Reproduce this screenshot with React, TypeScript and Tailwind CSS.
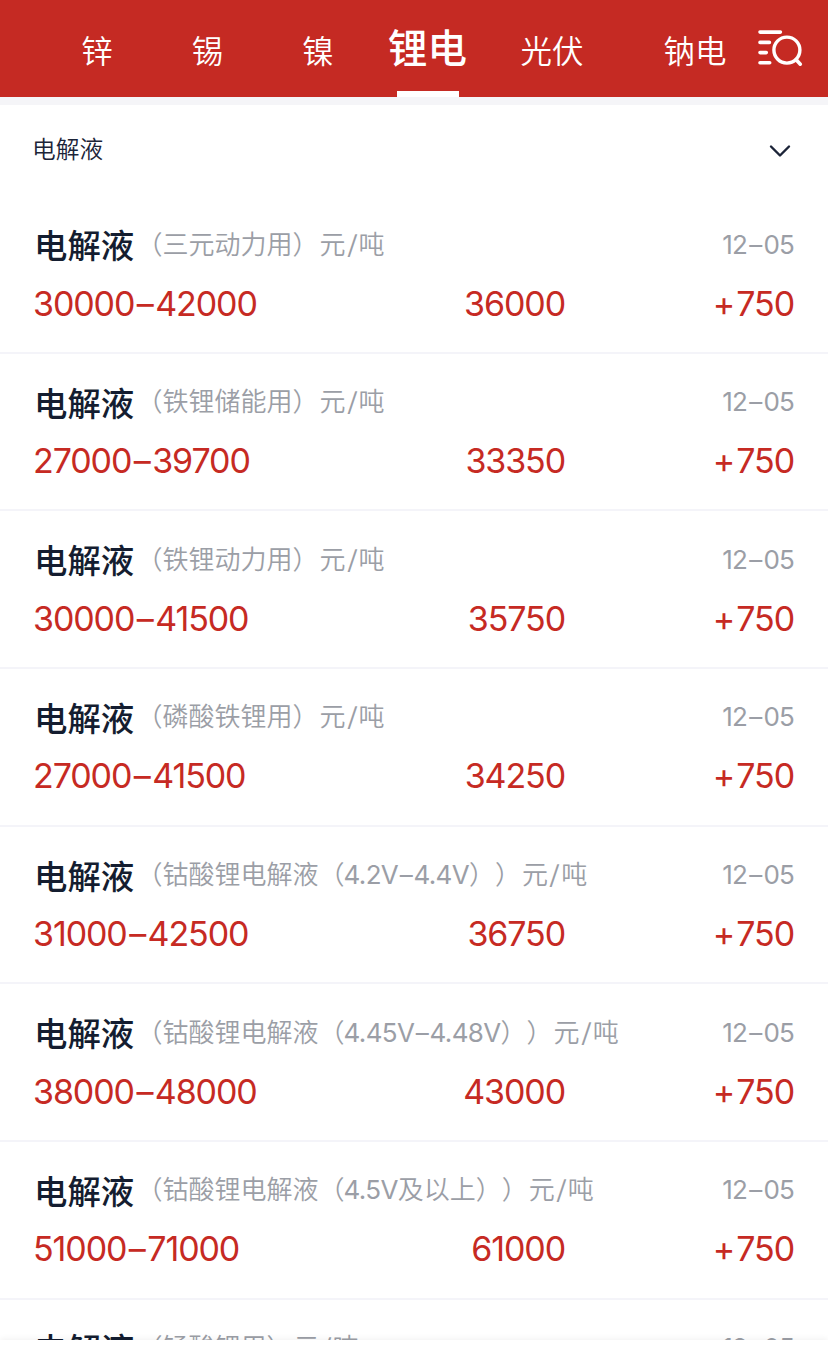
import { Fragment } from 'react';
import { ChevronDown } from 'lucide-react';
import clsx from 'clsx';

interface Quote {
  spec: string;
  range: string;
  average: string;
  change: string;
  date: string;
}

const TABS = [
  { label: '锌', className: 'w-[110px]' },
  { label: '锡', className: 'w-[111px]' },
  { label: '镍', className: 'w-[110px]' },
  { label: '锂电', className: 'w-[109px]' },
  { label: '光伏', className: 'w-[140px]' },
  { label: '钠电', className: 'ml-[33px] w-[80px]' },
];

const QUOTES: Quote[] = [
  { spec: '（三元动力用）', range: '30000–42000', average: '36000', change: '750', date: '12–05' },
  { spec: '（铁锂储能用）', range: '27000–39700', average: '33350', change: '750', date: '12–05' },
  { spec: '（铁锂动力用）', range: '30000–41500', average: '35750', change: '750', date: '12–05' },
  { spec: '（磷酸铁锂用）', range: '27000–41500', average: '34250', change: '750', date: '12–05' },
  { spec: '（钴酸锂电解液（4.2V–4.4V））', range: '31000–42500', average: '36750', change: '750', date: '12–05' },
  { spec: '（钴酸锂电解液（4.45V–4.48V））', range: '38000–48000', average: '43000', change: '750', date: '12–05' },
  { spec: '（钴酸锂电解液（4.5V及以上））', range: '51000–71000', average: '61000', change: '750', date: '12–05' },
  { spec: '（锰酸锂用）', range: '27000–39000', average: '33000', change: '750', date: '12–05' },
];

// Gives the dash between two numbers a bit of air
function Dashed({ text, gap }: { text: string; gap: string }) {
  return text.split('–').map((part, i) => (
    <Fragment key={i}>
      {i > 0 && <span className={gap}>–</span>}
      {part}
    </Fragment>
  ));
}

// Latin runs are set a step heavier than the Chinese around them
function Spec({ text }: { text: string }) {
  return text.split(/([\dV.–]+)/).map((run, i) =>
    i % 2 === 1 ? (
      <span key={i} className="-ml-px font-normal tracking-[-0.65px]">
        <Dashed text={run} gap="mx-[1.5px]" />
      </span>
    ) : (
      run
    )
  );
}

function ListSearchIcon() {
  return (
    <svg
      className="ml-[21px] h-[44px] w-[50px] shrink-0"
      viewBox="0 0 50 44"
      fill="none"
      stroke="currentColor"
      strokeWidth="3.6"
      strokeLinecap="round"
    >
      <path d="M4 5.1H24.4M4 15.4H13.4M4 25.6H10.3M4 35.8H13.7" />
      <circle cx="30.9" cy="23.1" r="13" strokeWidth="3.4" />
      <path d="M40.2 32.7L44.3 37.2" />
    </svg>
  );
}

function QuoteRow({ quote }: { quote: Quote }) {
  return (
    <li className="h-[157.67px] shrink-0 border-b-2 border-[#f4f4f9] px-[34px] pt-[28px]">
      <div className="flex h-[44px] items-center whitespace-nowrap">
        <h3 className="w-[102.5px] text-[33.4px] font-medium text-[#141d30]">电解液</h3>
        <p className="pb-[4px] text-[26px] font-[350] text-[#9b9ea6]">
          <Spec text={quote.spec} />
          <span className="ml-px">元</span>
          <span className="mx-[2px] inline-block scale-x-125">/</span>吨
        </p>
        <span className="ml-auto pb-[4px] text-[26px] tracking-[-0.8px] text-[#9b9ea6]">
          <Dashed text={quote.date} gap="mx-[2px]" />
        </span>
      </div>
      <div className="mt-[10px] flex h-[50px] items-center text-[34px] tracking-[-1.1px] text-[#c62a23]">
        <span className="-ml-px w-[300px]">
          <Dashed text={quote.range} gap="mx-[2.5px]" />
        </span>
        <span className="w-[232px] text-right">{quote.average}</span>
        <span className="ml-auto">
          <span className="mr-[2px]">+</span>
          {quote.change}
        </span>
      </div>
    </li>
  );
}

export default function App() {
  const active = '锂电';

  return (
    <div className="flex h-[1354px] w-[828px] flex-col overflow-hidden bg-white font-['Inter','Noto_Sans_CJK_SC',sans-serif] [text-spacing-trim:space-all]">
      <nav className="flex h-[97px] shrink-0 items-center bg-[#c52a23] pl-[42px] text-white">
        {TABS.map((tab) => (
          <button
            key={tab.label}
            className={clsx(
              'flex h-full shrink-0 flex-col items-center justify-between',
              tab.className,
              tab.label === active ? 'text-[39.5px] font-medium' : 'text-[31.5px] font-[350]'
            )}
          >
            <span className={clsx('leading-[50px]', tab.label === active ? 'pt-[24px]' : 'pt-[27px]')}>
              {tab.label}
            </span>
            {tab.label === active && <span className="h-[6px] w-[62px] bg-white" />}
          </button>
        ))}
        <ListSearchIcon />
      </nav>

      <div className="h-2 shrink-0 bg-[#f5f5f8]" />

      <div className="flex h-[91px] shrink-0 items-center justify-between pr-[30px] pl-[32px] text-[#1c2438]">
        <span className="pb-[2px] text-[23.7px] font-[350]">电解液</span>
        <ChevronDown className="h-9 w-9" strokeWidth={1.6} />
      </div>

      <ul className="flex min-h-0 flex-1 flex-col overflow-hidden">
        {QUOTES.map((quote) => (
          <QuoteRow key={quote.spec} quote={quote} />
        ))}
      </ul>

      <div className="z-10 h-[14px] shrink-0 bg-white shadow-[0_-1px_6px_rgba(0,0,0,0.06)]" />
    </div>
  );
}
